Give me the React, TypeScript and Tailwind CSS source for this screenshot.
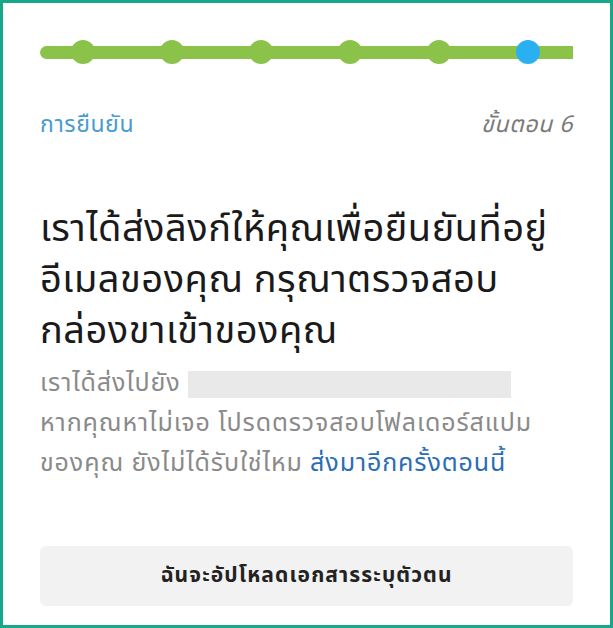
import React from 'react';

const steps = [1, 2, 3, 4, 5, 6];
const current = 6;

export default function App() {
  return (
    <div
      className="w-[613px] h-[628px] bg-white border-[3px] border-[#17a88b] px-[37px] pt-[37px] flex flex-col"
      style={{ fontFamily: '"Noto Sans Thai", "Noto Sans", sans-serif' }}
    >
      {/* progress */}
      <div className="relative h-[24px]">
        <div className="absolute left-0 right-0 top-[6px] h-[13px] bg-[#8bc34a] rounded-l-full" />
        <div className="relative flex gap-[65px] pl-[31px]">
          {steps.map((s) => (
            <div
              key={s}
              className={`w-[24px] h-[24px] rounded-full ${s === current ? 'bg-[#29b0f0]' : 'bg-[#8bc34a]'}`}
            />
          ))}
        </div>
      </div>

      {/* step header */}
      <div className="flex justify-between items-center mt-[46px] text-[23px] leading-[30px] tracking-[0.6px]">
        <span className="text-[#4a9bd1]">การยืนยัน</span>
        <span className="text-[#7a7a7a] italic">ขั้นตอน 6</span>
      </div>

      <h1 className="mt-[64px] text-[38px] leading-[51px] tracking-[0.5px] text-[#1a1a1a] font-normal whitespace-nowrap">
        เราได้ส่งลิงก์ให้คุณเพื่อยืนยันที่อยู่
        <br />
        อีเมลของคุณ กรุณาตรวจสอบ
        <br />
        กล่องขาเข้าของคุณ
      </h1>

      <p className="mt-[6px] text-[25px] leading-[40px] tracking-[0.9px] text-[#8a8a8a] whitespace-nowrap">
        เราได้ส่งไปยัง{' '}
        <span className="inline-block align-middle w-[323px] h-[27px] bg-[#e9e9e9]" />
        <br />
        หากคุณหาไม่เจอ โปรดตรวจสอบโฟลเดอร์สแปม
        <br />
        ของคุณ ยังไม่ได้รับใช่ไหม <a className="text-[#2a6db5]">ส่งมาอีกครั้งตอนนี้</a>
      </p>

      <button className="mt-auto mb-[19px] w-full h-[60px] rounded-[6px] bg-[#f2f2f2] text-[21px] tracking-[1.1px] font-bold text-[#222]">
        ฉันจะอัปโหลดเอกสารระบุตัวตน
      </button>
    </div>
  );
}
